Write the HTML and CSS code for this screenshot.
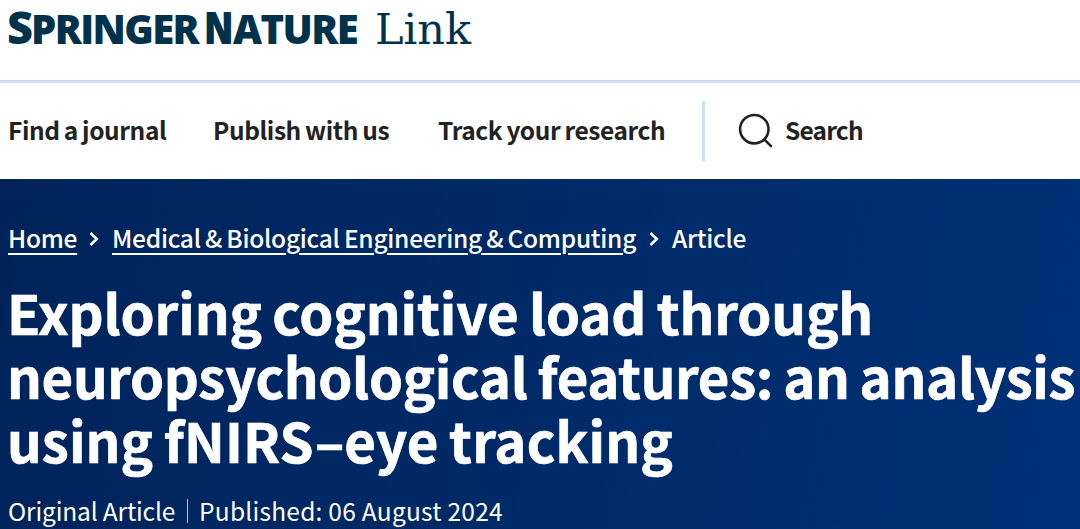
FILE: index.html
```
<!DOCTYPE html>
<html lang="en">
<head>
  <meta charset="utf-8">
  <title>Exploring cognitive load through neuropsychological features</title>
  <link rel="stylesheet" href="styles.css">
</head>
<body>
  <header class="header">
    <a class="logo" href="#"><span class="logo-s">S</span><span class="logo-pringer">PRINGER</span><span class="logo-n">N</span><span class="logo-ature">ATURE</span><span class="logo-link">Link</span></a>
  </header>

  <nav class="navbar">
    <a class="find" href="#">Find a journal</a>
    <a class="publish" href="#">Publish with us</a>
    <a class="track" href="#">Track your research</a>
    <a class="search" href="#">
      <svg width="36" height="36" viewBox="0 0 36 36" fill="none" stroke="#222" stroke-width="2.6" stroke-linecap="round">
        <circle cx="16.3" cy="16.2" r="14.2"/>
        <path d="M26.5 26.7L33 33.2"/>
      </svg>
      <span>Search</span>
    </a>
  </nav>

  <main class="hero">
    <div class="breadcrumbs">
      <a class="home" href="#">Home</a>
      <svg width="10" height="16" viewBox="0 0 10 16" fill="none" stroke="#fff" stroke-width="2.6"><path d="M1.5 2L7.8 8L1.5 14"/></svg>
      <a class="journal" href="#">Medical &amp; Biological Engineering &amp; Computing</a>
      <svg width="10" height="16" viewBox="0 0 10 16" fill="none" stroke="#fff" stroke-width="2.6"><path d="M1.5 2L7.8 8L1.5 14"/></svg>
      <span class="current">Article</span>
    </div>

    <h1 class="title">
      <span class="line1">Exploring cognitive load through</span>
      <span class="line2">neuropsychological features: an analysis</span>
      <span class="line3">using fNIRS&ndash;eye tracking</span>
    </h1>

    <div class="meta">
      <span class="type">Original Article</span>
      <span class="date">Published: 06 August 2024</span>
    </div>
  </main>
</body>
</html>
```
FILE: styles.css
```
body {
  margin: 0;
  height: 529px;
  overflow: hidden;
  background-color: #fff;
  color: #222;
  font-family: "Noto Sans CJK SC", "Open Sans", sans-serif;
}

a {
  color: inherit;
  text-decoration: none;
}

.header {
  box-sizing: border-box;
  height: 83px;
  border-bottom: 3px solid #cfddf0;
  padding-left: 7px;
}

.logo {
  display: flex;
  align-items: baseline;
  height: 60px;
  color: #01324b;
  font-family: "Open Sans", sans-serif;
  font-weight: 800;
  line-height: 54px;
}

.logo-s, .logo-n {
  font-size: 45px;
  font-stretch: 84%;
}

.logo-s {
  font-stretch: 100%;
}

.logo-pringer, .logo-ature {
  font-size: 40px;
  letter-spacing: -1.6px;
}

.logo-s {
  width: 24px;
}

.logo-n {
  width: 29px;
  margin-left: 6px;
}

.logo-link {
  margin-left: 18px;
  font-family: "DejaVu Serif", serif;
  font-size: 43px;
  font-weight: 400;
}

.navbar {
  display: flex;
  align-items: center;
  height: 96px;
  padding-left: 8px;
  font-size: 24.5px;
  font-weight: 700;
  letter-spacing: -0.4px;
  word-spacing: -1px;
  white-space: nowrap;
}

.find {
  width: 205px;
}

.publish {
  width: 225px;
}

.track {
  width: 264px;
}

.find, .publish, .track, .search span {
  padding-bottom: 4px;
}

.search {
  display: flex;
  align-items: center;
  gap: 11px;
  height: 60px;
  border-left: 3px solid #cfe0ee;
  padding-left: 33px;
}

.search span {
  letter-spacing: -0.8px;
}

.hero {
  box-sizing: border-box;
  height: 350px;
  border-top: 1px solid #01324b;
  padding: 41px 0 0 8px;
  background: linear-gradient(100deg, #00235b 0%, #002a66 45%, #003077 100%);
  color: #fff;
  white-space: nowrap;
}

.breadcrumbs {
  display: flex;
  align-items: center;
  height: 32px;
  font-size: 24.5px;
  font-weight: 500;
  letter-spacing: -0.25px;
  word-spacing: -1px;
}

.breadcrumbs a {
  text-decoration: underline;
  text-decoration-thickness: 2px;
  text-underline-offset: 5px;
}

.breadcrumbs svg {
  margin: 4px 13px 0;
}

.home {
  width: 68px;
}

.journal {
  width: 524px;
}

.title {
  margin: 27px 0 0 -1px;
  font-size: 54.5px;
  font-weight: 700;
  letter-spacing: -0.1px;
  word-spacing: -2px;
  line-height: 64px;
  -webkit-text-stroke: 0.7px #fff;
}

.title span {
  display: block;
}

.title .line2 {
  letter-spacing: -0.35px;
}

.title .line3 {
  letter-spacing: 0.1px;
}

.meta {
  display: flex;
  align-items: center;
  margin-top: 22px;
  font-size: 24.5px;
  line-height: 34px;
}

.type {
  width: 179px;
  letter-spacing: -0.15px;
}

.date {
  border-left: 1px solid #b5c4da;
  padding-left: 11px;
  line-height: 24px;
  letter-spacing: 0.25px;
}
```
